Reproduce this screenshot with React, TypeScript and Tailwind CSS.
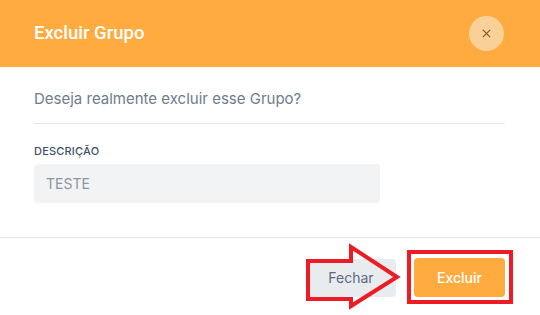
import React from "react";

export default function App() {
  return (
    <div className="relative w-[540px] h-[315px] bg-white flex flex-col overflow-hidden" style={{ fontFamily: "Inter, 'Open Sans', sans-serif" }}>
      <div className="h-[67px] shrink-0 bg-[#ffab40] flex items-center justify-between pl-[34px] pr-[36px]">
        <span className="text-white text-[18.5px] font-medium" style={{ fontFamily: "Roboto, sans-serif" }}>Excluir Grupo</span>
        <button className="w-[35px] h-[35px] rounded-full bg-[#f9d198] flex items-center justify-center">
          <svg width="9" height="9" viewBox="0 0 10 10"><path d="M1 1L9 9M9 1L1 9" stroke="#8a5a2a" strokeWidth="1.4" /></svg>
        </button>
      </div>
      <div className="flex-1 px-[34px] pr-[35px]">
        <div className="h-[57px] border-b border-[#e3e6ea] flex items-center pt-[9px]">
          <span className="text-[15px] text-[#6e7c8c]">Deseja realmente excluir esse Grupo?</span>
        </div>
        <div className="pt-[20px]">
          <div className="text-[11px] font-medium text-[#3e5068] tracking-[0.2px] leading-[14px]">DESCRIÇÃO</div>
          <div className="mt-[6px] w-[346px] h-[39px] rounded-[4px] bg-[#f2f3f4] flex items-center pl-[12px] text-[14px] text-[#8b96a3]">TESTE</div>
        </div>
      </div>
      <div className="h-[78px] shrink-0 border-t border-[#e3e6ea] flex items-center justify-end pr-[35px] gap-[18px] pt-[2px]">
        <button className="w-[90px] h-[38px] rounded-[4px] bg-[#e9ecef] text-[14px] text-[#5a6a7e]">Fechar</button>
        <div className="relative">
          <button className="w-[91px] h-[39px] rounded-[4px] bg-[#ffab40] text-[14px] font-medium text-white">Excluir</button>
          <div className="absolute left-[-7px] top-[-8px] w-[106px] h-[54px] border-[4px] border-[#ed1c24]" />
        </div>
      </div>
      <svg className="absolute left-0 top-0 pointer-events-none" width="540" height="315">
        <polygon points="308,261 351,261 351,247 397,277 351,306 351,299 308,299" fill="none" stroke="#ed1c24" strokeWidth="4" strokeLinejoin="miter" />
      </svg>
    </div>
  );
}
